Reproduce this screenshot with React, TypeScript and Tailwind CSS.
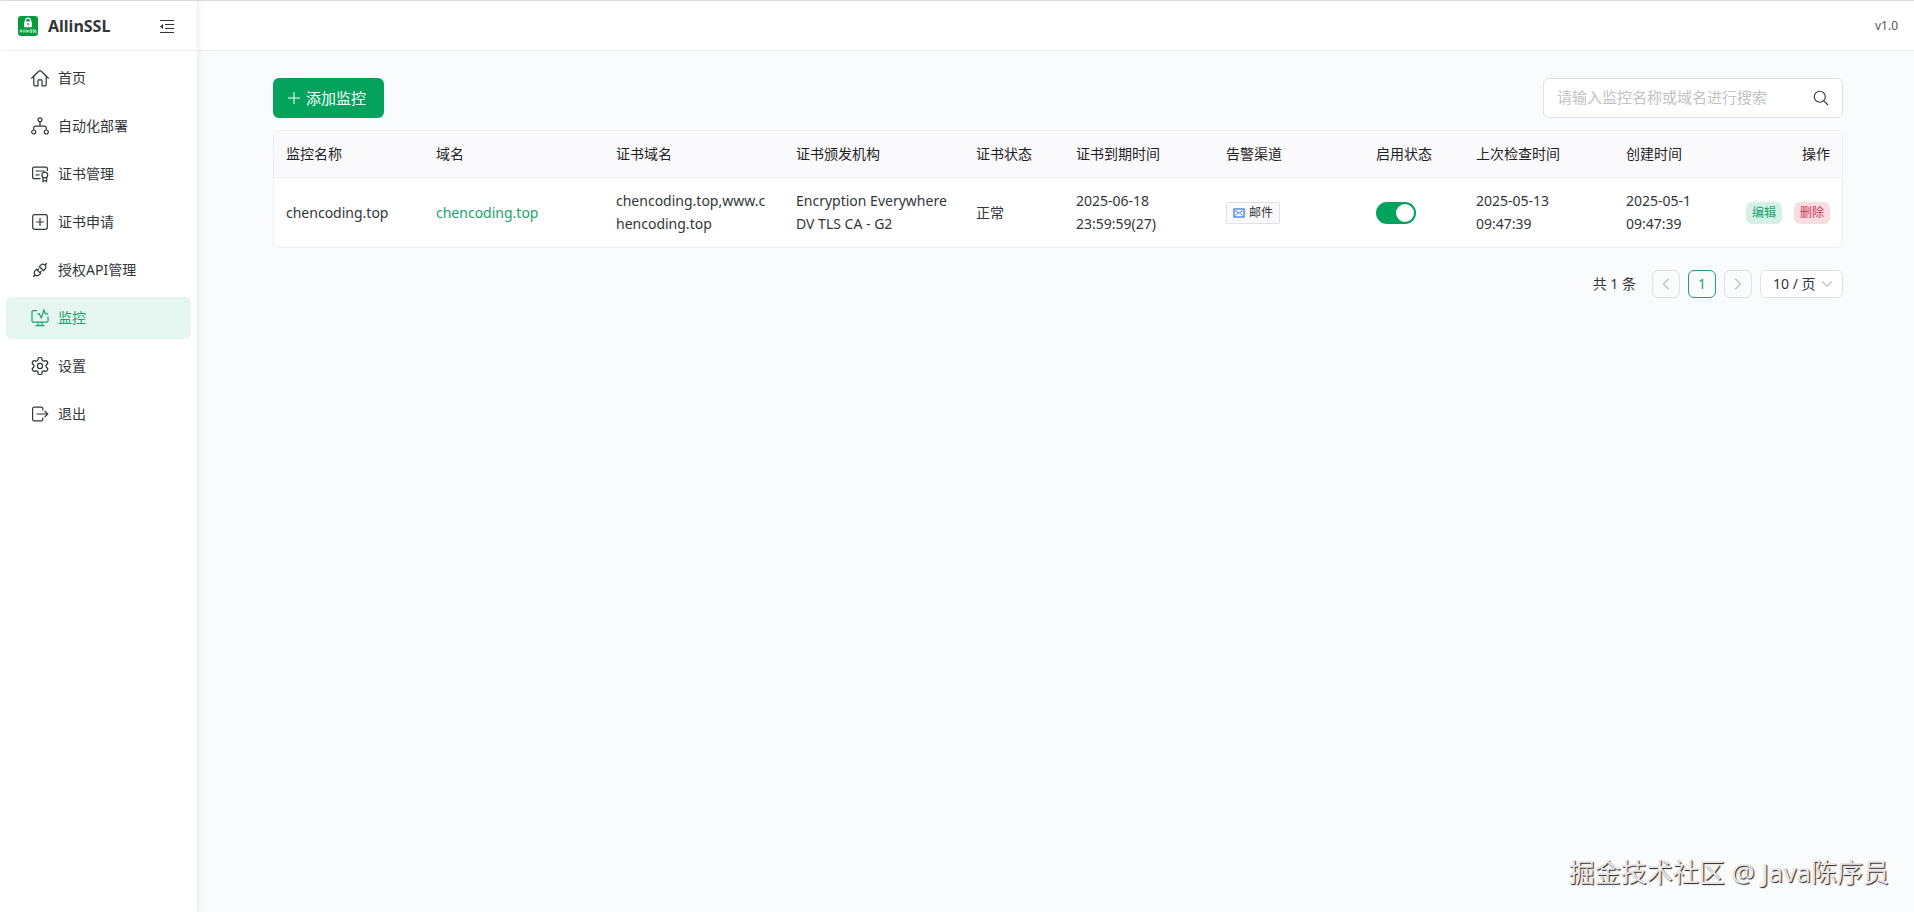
import React from 'react'
import { AiOutlineApi } from 'react-icons/ai'
import { IoSearchOutline } from 'react-icons/io5'
import { ChevronDown, ChevronLeft, ChevronRight } from 'lucide-react'

interface IconProps {
  className?: string
}

const HomeIcon: React.FC<IconProps> = ({ className }) => (
  <svg viewBox="0 0 18 18" fill="none" stroke="currentColor" strokeWidth="1.2" className={className}>
    <path d="M.6 9.200L8 2a1.400 1.400 0 0 1 2 0l7.400 7.200" strokeLinecap="round" />
    <path d="M2.800 7.300v8.200a1.300 1.300 0 0 0 1.300 1.300h2.900v-5.100a.8.800 0 0 1 .8-.8h2.400a.8.800 0 0 1 .8.800v5.100h2.900a1.300 1.300 0 0 0 1.300-1.300V7.300" />
  </svg>
)

const FlowIcon: React.FC<IconProps> = ({ className }) => (
  <svg viewBox="0 0 18 18" fill="none" stroke="currentColor" strokeWidth="1.2" className={className}>
    <circle cx="9" cy="2.8" r="2" />
    <circle cx="2.7" cy="15" r="2" />
    <circle cx="15.3" cy="15" r="2" />
    <path d="M9 4.8v4.4M2.7 13v-2.3a1.5 1.5 0 0 1 1.5-1.5h9.6a1.5 1.5 0 0 1 1.5 1.5V13" />
  </svg>
)

const CertIcon: React.FC<IconProps> = ({ className }) => (
  <svg viewBox="0 0 18 18" fill="none" stroke="currentColor" strokeWidth="1.2" className={className}>
    <path d="M16.4 6V3.500a1.300 1.300 0 0 0-1.300-1.300H2.900A1.300 1.300 0 0 0 1.600 3.500v8.800a1.300 1.300 0 0 0 1.300 1.300H9.500" />
    <path d="M4.500 6h9M4.500 9.800h4" />
    <circle cx="13.800" cy="10" r="2.900" />
    <path d="M12 12.400v4.200l1.800-1 1.800 1v-4.200" />
  </svg>
)

const ApplyIcon: React.FC<IconProps> = ({ className }) => (
  <svg viewBox="0 0 18 18" fill="none" stroke="currentColor" strokeWidth="1.2" className={className}>
    <rect x="1.700" y="1.700" width="14.600" height="14.600" rx="2" />
    <path d="M9 5v8M5 9h8" />
  </svg>
)

const MonitorIcon: React.FC<IconProps> = ({ className }) => (
  <svg viewBox="0 0 18 18" fill="none" stroke="currentColor" strokeWidth="1.2" className={className}>
    <path d="M6 1.600H2.200a1.200 1.200 0 0 0-1.200 1.200v9.200a1.200 1.200 0 0 0 1.200 1.200h13.600a1.200 1.200 0 0 0 1.200-1.200V7.500" />
    <path d="M7 13.200v3.200M11 13.200v3.200M4.500 16.700h9" />
    <path d="M6.500 4.800h1.800l2 4.200 2.600-8 1.500 3.800h2.800" />
  </svg>
)

const SettingsIcon: React.FC<IconProps> = ({ className }) => (
  <svg viewBox="1.500 1.500 21 21" fill="none" stroke="currentColor" strokeWidth="1.500" className={className}>
    <path d="M9.671 4.136a2.340 2.340 0 0 1 4.659 0 2.340 2.340 0 0 0 3.319 1.915 2.340 2.340 0 0 1 2.330 4.033 2.340 2.340 0 0 0 0 3.831 2.340 2.340 0 0 1-2.330 4.033 2.340 2.340 0 0 0-3.319 1.915 2.340 2.340 0 0 1-4.659 0 2.340 2.340 0 0 0-3.320-1.915 2.340 2.340 0 0 1-2.330-4.033 2.340 2.340 0 0 0 0-3.831A2.340 2.340 0 0 1 6.350 6.051a2.340 2.340 0 0 0 3.319-1.915" />
    <circle cx="12" cy="12" r="3" />
  </svg>
)

const LogoutIcon: React.FC<IconProps> = ({ className }) => (
  <svg viewBox="0 0 18 18" fill="none" stroke="currentColor" strokeWidth="1.200" className={className}>
    <path d="M11.800 5.500V3.700a1.500 1.500 0 0 0-1.500-1.500H3.100a1.500 1.500 0 0 0-1.500 1.500v10.600a1.500 1.500 0 0 0 1.500 1.500h7.200a1.500 1.500 0 0 0 1.500-1.500v-1.800" />
    <path d="M5.500 9h11.200M13.600 5.900L16.700 9l-3.100 3.100" />
  </svg>
)

const FoldIcon: React.FC<IconProps> = ({ className }) => (
  <svg viewBox="0 0 14 14" className={className}>
    <path d="M0 1.500h14M5 5.500h9M5 9.500h9M0 13.500h14" fill="none" stroke="currentColor" strokeWidth="1.100" />
    <path d="M0 7.500l3-2.600v5.200z" fill="currentColor" />
  </svg>
)

const LogoIcon: React.FC<IconProps> = ({ className }) => (
  <svg viewBox="0 0 20 20" className={className}>
    <rect width="20" height="20" rx="3" fill="#079a3e" />
    <path d="M7.500 6V4.600a2.500 2.500 0 0 1 5 0V6" fill="none" stroke="#fff" strokeWidth="1.300" />
    <rect x="6" y="5.600" width="8" height="5.600" rx=".8" fill="#fff" />
    <path d="M10 7v2.500" stroke="#079a3e" strokeWidth="1.200" />
    <path
      d="M1.800 16.500l1.100-3 1 3M5.200 13.500v3M6.800 13.500v3M8.300 13.500v3M9.600 16.500v-2h1.300v2M14 13.800h-1.600v1.200h1.400v1.300h-1.600M16.600 13.800H15v1.200h1.500v1.300h-1.600M17.700 13.500v2.900h1"
      fill="none"
      stroke="#fff"
      strokeWidth=".7"
    />
  </svg>
)

const PlusIcon: React.FC<IconProps> = ({ className }) => (
  <svg viewBox="0 0 12 12" fill="none" stroke="currentColor" className={className}>
    <path d="M6 0v12M0 6h12" />
  </svg>
)

const MailIcon: React.FC<IconProps> = ({ className }) => (
  <svg viewBox="0 0 12 12" fill="none" stroke="#2f6fe0" className={className}>
    <rect x="1" y="2" width="10" height="8" strokeWidth="1.200" />
    <path d="M2.500 3.800L6 6.300l3.500-2.500M2.800 8.500l1.900-2M9.200 8.500l-1.900-2" />
  </svg>
)

const menuItems = [
  { label: '首页', icon: HomeIcon },
  { label: '自动化部署', icon: FlowIcon },
  { label: '证书管理', icon: CertIcon },
  { label: '证书申请', icon: ApplyIcon },
  { label: '授权API管理', icon: AiOutlineApi },
  { label: '监控', icon: MonitorIcon, active: true },
  { label: '设置', icon: SettingsIcon },
  { label: '退出', icon: LogoutIcon }
]

const columns = [
  { title: '监控名称', width: 'w-[150px]' },
  { title: '域名', width: 'w-[180px]' },
  { title: '证书域名', width: 'w-[180px]' },
  { title: '证书颁发机构', width: 'w-[180px]' },
  { title: '证书状态', width: 'w-[100px]' },
  { title: '证书到期时间', width: 'w-[150px]' },
  { title: '告警渠道', width: 'w-[150px]' },
  { title: '启用状态', width: 'w-[100px]' },
  { title: '上次检查时间', width: 'w-[150px]' },
  { title: '创建时间', width: '' }
]

const monitors = [
  {
    name: 'chencoding.top',
    domain: 'chencoding.top',
    certDomain: 'chencoding.top,www.chencoding.top',
    issuer: 'Encryption Everywhere DV TLS CA - G2',
    status: '正常',
    expires: ['2025-06-18', '23:59:59(27)'],
    channel: '邮件',
    enabled: true,
    checkedAt: ['2025-05-13', '09:47:39'],
    createdAt: ['2025-05-1', '09:47:39']
  }
]

const Sidebar = () => (
  <aside className="relative z-10 flex w-[198px] shrink-0 flex-col border-r border-[#efeff2] bg-white pl-[2px] shadow-[2px_0_8px_rgba(0,0,0,0.05)]">
    <div className="flex h-[50px] items-center border-b border-[#efeff2] pr-[23px] pl-4">
      <LogoIcon className="h-5 w-5" />
      <span className="ml-[10px] text-base font-bold">AllinSSL</span>
      <button type="button" aria-label="收起菜单" className="ml-auto">
        <FoldIcon className="h-[14px] w-[14px]" />
      </button>
    </div>
    <nav className="flex flex-col gap-[6px] pt-[6px] pr-[6px] pl-1">
      {menuItems.map(({ label, icon: Icon, active }) => (
        <a
          key={label}
          href="#"
          className={`flex h-[42px] items-center gap-[9px] rounded-md pl-[25px] ${active ? 'bg-[#e5f5ef] text-[#18a46c]' : ''}`}
        >
          <Icon className="h-[18px] w-[18px]" />
          <span className="pb-[2px]">{label}</span>
        </a>
      ))}
    </nav>
  </aside>
)

const Lines = ({ lines }: { lines: string[] }) => (
  <>
    {lines.map(line => (
      <div key={line}>{line}</div>
    ))}
  </>
)

const MonitorTable = () => (
  <div className="mt-3 overflow-hidden rounded-md border border-[#efeff2] bg-white">
    <table className="w-full table-fixed text-left">
      <thead>
        <tr className="h-[46px] border-b border-[#efeff2] bg-[#fafafc] text-[#1f2225]">
          {columns.map(col => (
            <th key={col.title} className={`px-3 font-normal whitespace-nowrap ${col.width}`}>
              {col.title}
            </th>
          ))}
          <th className="w-[150px] px-3 text-right font-normal">操作</th>
        </tr>
      </thead>
      <tbody>
        {monitors.map(row => (
          <tr key={row.name} className="h-[70px]">
            <td className="px-3">{row.name}</td>
            <td className="px-3">
              <a href="#" className="text-[#18a46c]">
                {row.domain}
              </a>
            </td>
            <td className="px-3 break-all">{row.certDomain}</td>
            <td className="px-3">{row.issuer}</td>
            <td className="px-3">{row.status}</td>
            <td className="px-3">
              <Lines lines={row.expires} />
            </td>
            <td className="px-3">
              <span className="inline-flex h-[22px] items-center gap-1 rounded-xs border border-[#e0e0e6] bg-[#fafafc] px-[6px] align-middle text-xs">
                <MailIcon className="h-3 w-3" />
                {row.channel}
              </span>
            </td>
            <td className="px-3 pt-px">
              <label className="relative block h-[22px] w-10">
                <input
                  type="checkbox"
                  role="switch"
                  aria-label="启用状态"
                  defaultChecked={row.enabled}
                  className="peer block h-full w-full appearance-none rounded-full bg-[#dbdbdb] checked:bg-[#03a35e]"
                />
                <span className="absolute top-[2px] left-[2px] h-[18px] w-[18px] rounded-full bg-white peer-checked:left-5" />
              </label>
            </td>
            <td className="px-3">
              <Lines lines={row.checkedAt} />
            </td>
            <td className="overflow-hidden pl-3 whitespace-nowrap">
              <Lines lines={row.createdAt} />
            </td>
            <td className="px-3 pt-px">
              <div className="flex justify-end gap-3 text-xs">
                <button type="button" className="h-[22px] rounded-md bg-[#d5f0e4] px-[6px] text-[#18a46c]">
                  编辑
                </button>
                <button type="button" className="h-[22px] rounded-md bg-[#f9dde3] px-[6px] text-[#d03050]">
                  删除
                </button>
              </div>
            </td>
          </tr>
        ))}
      </tbody>
    </table>
  </div>
)

const Pagination = () => (
  <div className="mt-[22px] flex items-center justify-end gap-2">
    <span className="mr-2 pb-[2px]">共 1 条</span>
    <button
      type="button"
      aria-label="上一页"
      className="flex h-7 w-7 items-center justify-center rounded-md border border-[#e0e0e6] text-[#c2c2c2]"
    >
      <ChevronLeft className="h-5 w-5" strokeWidth={1.5} />
    </button>
    <button type="button" className="h-7 w-7 rounded-md border border-[#18a46c] pb-[2px] text-[#18a46c]">
      1
    </button>
    <button
      type="button"
      aria-label="下一页"
      className="flex h-7 w-7 items-center justify-center rounded-md border border-[#e0e0e6] text-[#c2c2c2]"
    >
      <ChevronRight className="h-5 w-5" strokeWidth={1.5} />
    </button>
    <div className="relative">
      <select
        aria-label="每页条数"
        className="block h-7 w-[83px] appearance-none rounded-md border border-[#e0e0e6] bg-white pl-3 leading-[26px]"
      >
        <option>10 / 页</option>
      </select>
      <ChevronDown className="pointer-events-none absolute top-[5px] right-[7px] h-[18px] w-[18px] text-[#c2c2c2]" strokeWidth={1.5} />
    </div>
  </div>
)

export default function App() {
  return (
    <div className="relative flex min-h-screen border-t border-[#dcdcdc] bg-[#fafbfd] font-['Noto_Sans','Noto_Sans_CJK_SC',sans-serif] text-sm leading-[23px] text-[#333639]">
      <Sidebar />
      <div className="flex min-w-0 flex-1 flex-col">
        <header className="flex h-[50px] items-center justify-end border-b border-[#efeff2] bg-white px-4 text-xs text-[#555]">
          v1.0
        </header>
        <main className="pt-[27px] pr-[71px] pl-[75px]">
          <div className="flex items-center justify-between">
            <button
              type="button"
              className="flex h-10 items-center gap-[6px] rounded-md bg-[#03a35e] pr-[18px] pl-[15px] text-[15px] text-white"
            >
              <PlusIcon className="h-3 w-3" />
              添加监控
            </button>
            <div className="flex h-10 w-[300px] items-center rounded-md border border-[#e0e0e6] bg-white pr-3 pl-[13px]">
              <input
                type="text"
                aria-label="搜索监控"
                placeholder="请输入监控名称或域名进行搜索"
                className="min-w-0 flex-1 bg-transparent pb-[2px] text-[15px] outline-none placeholder:text-[#c2c2c2]"
              />
              <button type="button" aria-label="搜索">
                <IoSearchOutline className="h-[18px] w-[18px]" />
              </button>
            </div>
          </div>
          <MonitorTable />
          <Pagination />
        </main>
      </div>
      <div className="absolute right-[25px] bottom-7 text-[26px] leading-[23px] text-[#e6e6e6] [text-shadow:1px_1px_1px_#222]">
        掘金技术社区 @ Java陈序员
      </div>
    </div>
  )
}
